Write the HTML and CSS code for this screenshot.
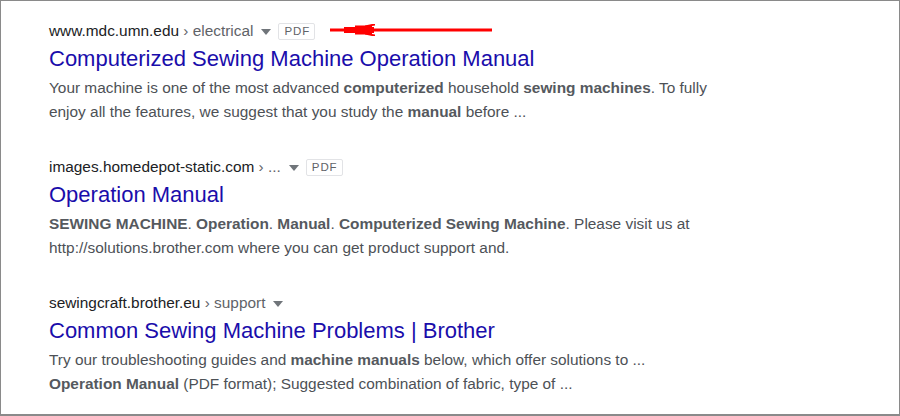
FILE: index.html
```html
<!DOCTYPE html>
<html>
<head>
<meta charset="utf-8">
<link rel="stylesheet" href="styles.css">
</head>
<body>
<div class="frame">
  <div class="result">
    <div class="cite">
      <span class="domain">www.mdc.umn.edu</span><span class="crumb"> › electrical</span>
      <span class="caret"></span>
      <span class="badge">PDF</span>
      <svg class="arrow" width="162" height="14" viewBox="0 0 162 14">
        <rect x="0" y="5.5" width="162" height="3" fill="#ff0000"/>
        <rect x="14" y="4" width="30" height="6" fill="#ff0000"/>
        <rect x="25" y="2.5" width="17" height="9" fill="#ff0000"/>
        <polygon points="35,2.5 42,1 45,1 45,2.5 42,3 42,11 45,11.5 45,13 42,13 35,11.5" fill="#ff0000"/>
      </svg>
    </div>
    <h3 class="title">Computerized Sewing Machine Operation Manual</h3>
    <div class="snippet">Your machine is one of the most advanced <b>computerized</b> household <b>sewing machines</b>. To fully<br>enjoy all the features, we suggest that you study the <b>manual</b> before ...</div>
  </div>
  <div class="result">
    <div class="cite">
      <span class="domain">images.homedepot-static.com</span><span class="crumb"> › ...</span>
      <span class="caret"></span>
      <span class="badge">PDF</span>
    </div>
    <h3 class="title">Operation Manual</h3>
    <div class="snippet"><b>SEWING MACHINE</b>. <b>Operation</b>. <b>Manual</b>. <b>Computerized Sewing Machine</b>. Please visit us at<br>http://solutions.brother.com where you can get product support and.</div>
  </div>
  <div class="result">
    <div class="cite">
      <span class="domain">sewingcraft.brother.eu</span><span class="crumb"> › support</span>
      <span class="caret"></span>
    </div>
    <h3 class="title">Common Sewing Machine Problems | Brother</h3>
    <div class="snippet">Try our troubleshooting guides and <b>machine manuals</b> below, which offer solutions to ...<br><b>Operation Manual</b> (PDF format); Suggested combination of fabric, type of ...</div>
  </div>
</div>
</body>
</html>
```
FILE: styles.css
```css
html, body {
  margin: 0;
  padding: 0;
  background: #ffffff;
}
.frame {
  width: 900px;
  height: 416px;
  box-sizing: border-box;
  border: 1px solid #8a8a8a;
  border-bottom-width: 2px;
  padding: 20px 0 0 48px;
  font-family: "Liberation Sans", Arial, sans-serif;
  display: flex;
  flex-direction: column;
  gap: 33px;
}
.result {
  display: flex;
  flex-direction: column;
}
.cite {
  height: 20px;
  display: flex;
  align-items: center;
  font-size: 15.4px;
  line-height: 20px;
  white-space: pre;
}
.domain {
  color: #202124;
}
.crumb {
  color: #5f6368;
}
.caret {
  width: 0;
  height: 0;
  border-left: 5px solid transparent;
  border-right: 5px solid transparent;
  border-top: 6px solid #70757a;
  margin: 2px 7px 0 8px;
}
.badge {
  font-size: 11.5px;
  letter-spacing: 0.9px;
  color: #5f6368;
  border: 1px solid #e2e3e6;
  border-radius: 2px;
  padding: 0 4px 0 5px;
  line-height: 15px;
}
.arrow {
  margin-left: 15px;
  margin-top: -2px;
}
.title {
  margin: 0;
  padding-top: 4px;
  font-size: 22px;
  line-height: 28px;
  font-weight: normal;
  color: #1a0dab;
}
.snippet {
  margin-top: 3px;
  font-size: 15.4px;
  line-height: 24px;
  color: #4d5156;
}
.snippet b {
  color: #55595e;
}
```
